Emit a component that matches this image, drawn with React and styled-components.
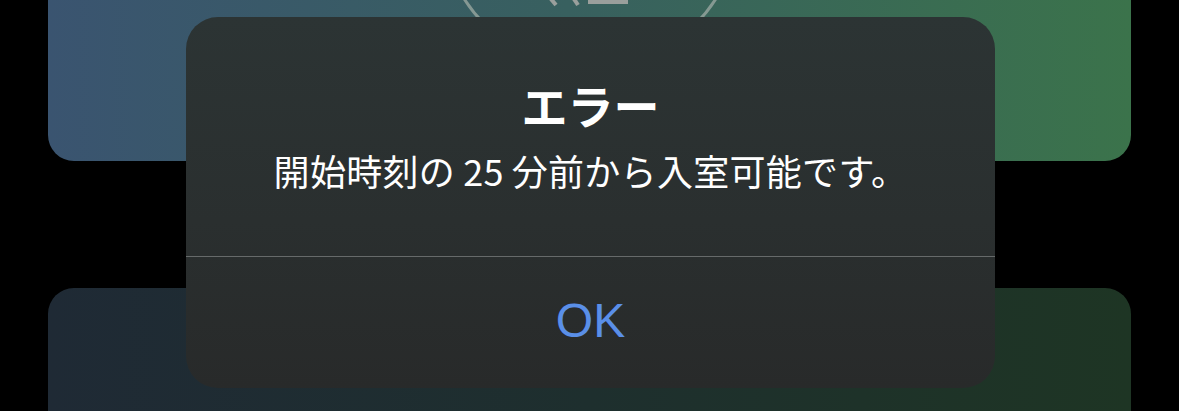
import React from 'react'
import styled, { createGlobalStyle } from 'styled-components'

const GlobalStyle = createGlobalStyle`
  html, body {
    margin: 0;
    padding: 0;
    background: #000;
    overflow: hidden;
  }
  body {
    font-family: "Noto Sans CJK JP", "Noto Sans", sans-serif;
  }
`

const Screen = styled.div`
  position: relative;
  width: 1179px;
  height: 411px;
  overflow: hidden;
  background: #000;
`

const CardList = styled.div`
  display: flex;
  flex-direction: column;
  gap: 127px;
  padding: 0 48px;
  margin-top: -240px;
`

const Card = styled.div`
  height: ${props => props.height}px;
  border-radius: 26px;
  background: ${props => props.background};
  display: flex;
  flex-direction: column;
  align-items: center;
  padding-top: ${props => props.padTop || 0}px;
  box-sizing: border-box;
`

const Overlay = styled.div`
  position: absolute;
  inset: 0;
  display: flex;
  align-items: center;
  justify-content: center;
`

const Dialog = styled.div`
  width: 809px;
  height: 371px;
  margin-top: -6px;
  margin-left: 2px;
  border-radius: 32px;
  background: linear-gradient(180deg, #2c3434 0%, #2a2f2f 55%, #282a2a 100%);
  display: flex;
  flex-direction: column;
  overflow: hidden;
`

const Body = styled.div`
  height: 240px;
  display: flex;
  flex-direction: column;
  align-items: center;
  padding-top: 60px;
  box-sizing: border-box;
  border-bottom: 1px solid #666a6a;
`

const Title = styled.div`
  color: #fff;
  font-size: 46px;
  font-weight: 700;
  line-height: 55px;
`

const Message = styled.div`
  margin-top: 17px;
  color: #fff;
  font-size: 36px;
  line-height: 43px;
  letter-spacing: 0.3px;
`

const Digits = styled.span`
  margin: 0 8px;
`

const OkButton = styled.button`
  flex: 1;
  border: none;
  background: transparent;
  color: #5a8fe8;
  font-family: "Liberation Sans", "Noto Sans", sans-serif;
  font-size: 48px;
  padding: 0 0 4px;
  cursor: pointer;
`

const Ring = () => (
  <svg width="304" height="304" viewBox="0 0 304 304">
    <circle cx="152" cy="152" r="149" fill="none" stroke="#93a29c" strokeWidth="3" opacity="0.85" />
    <path d="M108 226 L118 238" stroke="#9a9f9c" strokeWidth="4" fill="none" />
    <path d="M132 226 L140 238" stroke="#9a9f9c" strokeWidth="4" fill="none" />
    <rect x="150" y="220" width="40" height="17" fill="#9a9f9c" />
  </svg>
)

const App = () => {
  return (
    <>
      <GlobalStyle />
      <Screen>
        <CardList>
          <Card
            height={401}
            padTop={7}
            background="linear-gradient(90deg, #3a5470 0%, #38605f 48%, #3b734b 100%)"
          >
            <Ring />
          </Card>
          <Card
            height={300}
            background="linear-gradient(90deg, #1f2a35 0%, #1e2f2e 50%, #1e3524 100%)"
          />
        </CardList>
        <Overlay>
          <Dialog>
            <Body>
              <Title>エラー</Title>
              <Message>
                開始時刻の<Digits>25</Digits>分前から入室可能です。
              </Message>
            </Body>
            <OkButton>OK</OkButton>
          </Dialog>
        </Overlay>
      </Screen>
    </>
  )
}

export default App
